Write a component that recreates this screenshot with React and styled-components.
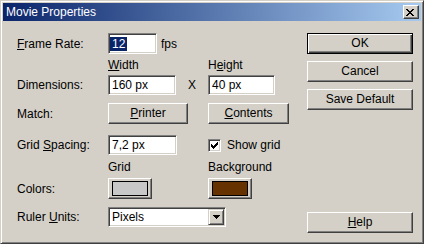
import React from 'react';
import styled, { createGlobalStyle } from 'styled-components';

const Global = createGlobalStyle`
  html, body { margin: 0; padding: 0; background: #d4d0c8; }
  body { font-family: "Liberation Sans", Arial, sans-serif; font-size: 12px; color: #000; }
  * { box-sizing: border-box; }
`;

const Window = styled.div`
  width: 424px;
  height: 244px;
  background: #d4d0c8;
  border: 1px solid;
  border-color: #d4d0c8 #404040 #404040 #d4d0c8;
  box-shadow: inset 1px 1px #fff, inset -1px -1px #808080;
  padding: 2px;
  display: flex;
  flex-direction: column;
`;

const TitleBar = styled.div`
  height: 18px;
  flex-shrink: 0;
  display: flex;
  align-items: center;
  justify-content: space-between;
  padding: 0 2px 0 3px;
  background: linear-gradient(to right, #0a246a, #a6caf0);
  color: #fff;
`;

const Title = styled.span`
  font-size: 12px;
  line-height: 18px;
  white-space: nowrap;
`;

const CloseButton = styled.div`
  width: 16px;
  height: 14px;
  display: flex;
  align-items: center;
  justify-content: flex-start;
  padding-left: 2px;
  background: #d4d0c8;
  border: 1px solid;
  border-color: #fff #404040 #404040 #fff;
  box-shadow: inset -1px -1px #808080;
`;

const Body = styled.div`
  flex: 1;
  display: flex;
  padding: 12px 8px 8px 14px;
`;

const LeftPanel = styled.div`
  width: 290px;
  flex-shrink: 0;
  display: flex;
  flex-direction: column;
`;

const RightPanel = styled.div`
  width: 106px;
  display: flex;
  flex-direction: column;
  gap: 7px;
`;

const Row = styled.div`
  display: grid;
  grid-template-columns: 91px 100px 1fr;
  align-items: center;
  height: ${p => p.$h}px;
  margin-top: ${p => p.$mt || 0}px;
`;

const Label = styled.span`
  white-space: nowrap;
`;

const Cell = styled.div`
  display: flex;
  align-items: center;
  gap: ${p => p.$gap || 0}px;
  white-space: nowrap;
`;

const Key = styled.span`
  text-decoration: underline;
`;

const Field = styled.div`
  width: ${p => p.$w}px;
  height: ${p => p.$h}px;
  flex-shrink: 0;
  display: flex;
  align-items: center;
  padding: 0 3px;
  background: #fff;
  border: 1px solid;
  border-color: #808080 #fff #fff #808080;
  box-shadow: inset 1px 1px #404040, inset -1px -1px #d4d0c8;
  white-space: nowrap;
  position: relative;
`;

const Selected = styled.span`
  display: inline-block;
  margin-left: -2px;
  padding: 0 2px;
  line-height: 14px;
  background: #0a246a;
  color: #fff;
`;

const Times = styled.span`
  flex: 1;
  text-align: center;
  font-size: 12px;
`;

const Button = styled.div`
  width: ${p => p.$w}px;
  height: 21px;
  flex-shrink: 0;
  display: flex;
  align-items: center;
  justify-content: center;
  padding-bottom: 1px;
  background: #d4d0c8;
  border: 1px solid;
  border-color: ${p => (p.$default ? '#000' : '#fff #404040 #404040 #fff')};
  box-shadow: ${p =>
    p.$default
      ? 'inset 1px 1px #fff, inset -1px -1px #404040, inset -2px -2px #808080'
      : 'inset -1px -1px #808080'};
  margin-top: ${p => (p.$push ? 'auto' : '0')};
  white-space: nowrap;
`;

const ColorButton = styled(Button)`
  padding: 2px 3px 2px 3px;
`;

const Swatch = styled.div`
  width: 100%;
  height: 100%;
  border: 1px solid #000;
  background: ${p => p.$color};
`;

const CheckBox = styled.div`
  width: 13px;
  height: 13px;
  flex-shrink: 0;
  display: flex;
  align-items: center;
  justify-content: center;
  background: #fff;
  border: 1px solid;
  border-color: #808080 #fff #fff #808080;
  box-shadow: inset 1px 1px #404040, inset -1px -1px #d4d0c8;
`;

const Select = styled(Field)`
  justify-content: space-between;
  padding: 0 0 0 3px;
`;

const ArrowButton = styled.div`
  width: 16px;
  height: 16px;
  margin-right: 1px;
  display: flex;
  align-items: center;
  justify-content: center;
  background: #d4d0c8;
  border: 1px solid;
  border-color: #d4d0c8 #404040 #404040 #d4d0c8;
  box-shadow: inset 1px 1px #fff, inset -1px -1px #808080;
`;

const closePath = Array.from({ length: 7 }, (_, r) =>
  `M${r} ${r}h2v1h-2z M${6 - r} ${r}h2v1h-2z`
).join(' ');

const checkTops = [2, 3, 4, 3, 2, 1, 0];
const checkPath = checkTops.map((t, c) => `M${c} ${t}h1v3h-1z`).join(' ');

const CloseIcon = () => (
  <svg width="8" height="7" viewBox="0 0 8 7" shapeRendering="crispEdges">
    <path d={closePath} fill="#000" />
  </svg>
);

const CheckIcon = () => (
  <svg width="7" height="7" viewBox="0 0 7 7" shapeRendering="crispEdges">
    <path d={checkPath} fill="#000" />
  </svg>
);

const ArrowIcon = () => (
  <svg width="7" height="4" viewBox="0 0 7 4" shapeRendering="crispEdges">
    <path d="M0 0h7v1h-7z M1 1h5v1h-5z M2 2h3v1h-3z M3 3h1v1h-1z" fill="#000" />
  </svg>
);

export default function App() {
  return (
    <>
      <Global />
      <Window>
        <TitleBar>
          <Title>Movie Properties</Title>
          <CloseButton>
            <CloseIcon />
          </CloseButton>
        </TitleBar>
        <Body>
          <LeftPanel>
            <Row $h={21}>
              <Label><Key>F</Key>rame Rate:</Label>
              <Cell $gap={4}>
                <Field $w={49} $h={21}><Selected>12</Selected></Field>
                <span>fps</span>
              </Cell>
            </Row>
            <Row $h={21}>
              <span />
              <Label><Key>W</Key>idth</Label>
              <Label>H<Key>e</Key>ight</Label>
            </Row>
            <Row $h={20}>
              <Label>Dimensions:</Label>
              <Cell>
                <Field $w={68} $h={20}>160 px</Field>
                <Times>X</Times>
              </Cell>
              <Cell>
                <Field $w={67} $h={20}>40 px</Field>
              </Cell>
            </Row>
            <Row $h={21} $mt={8}>
              <Label>Match:</Label>
              <Cell>
                <Button $w={80}><span><Key>P</Key>rinter</span></Button>
              </Cell>
              <Cell>
                <Button $w={81}><span><Key>C</Key>ontents</span></Button>
              </Cell>
            </Row>
            <Row $h={20} $mt={11}>
              <Label>Grid <Key>S</Key>pacing:</Label>
              <Cell>
                <Field $w={69} $h={20}>7,2 px</Field>
              </Cell>
              <Cell $gap={6}>
                <CheckBox><CheckIcon /></CheckBox>
                <span>Show <Key>g</Key>rid</span>
              </Cell>
            </Row>
            <Row $h={23}>
              <span />
              <Label>Grid</Label>
              <Label>Background</Label>
            </Row>
            <Row $h={21}>
              <Label>Colors:</Label>
              <Cell>
                <ColorButton $w={44}><Swatch $color="#c8c8c8" /></ColorButton>
              </Cell>
              <Cell>
                <ColorButton $w={44}><Swatch $color="#663300" /></ColorButton>
              </Cell>
            </Row>
            <Row $h={20} $mt={8}>
              <Label>Ruler <Key>U</Key>nits:</Label>
              <Cell>
                <Select $w={118} $h={20}>
                  <span>Pixels</span>
                  <ArrowButton><ArrowIcon /></ArrowButton>
                </Select>
              </Cell>
            </Row>
          </LeftPanel>
          <RightPanel>
            <Button $w={106} $default>OK</Button>
            <Button $w={106}>Cancel</Button>
            <Button $w={106}>Save Default</Button>
            <Button $w={106} $push><span><Key>H</Key>elp</span></Button>
          </RightPanel>
        </Body>
      </Window>
    </>
  );
}
